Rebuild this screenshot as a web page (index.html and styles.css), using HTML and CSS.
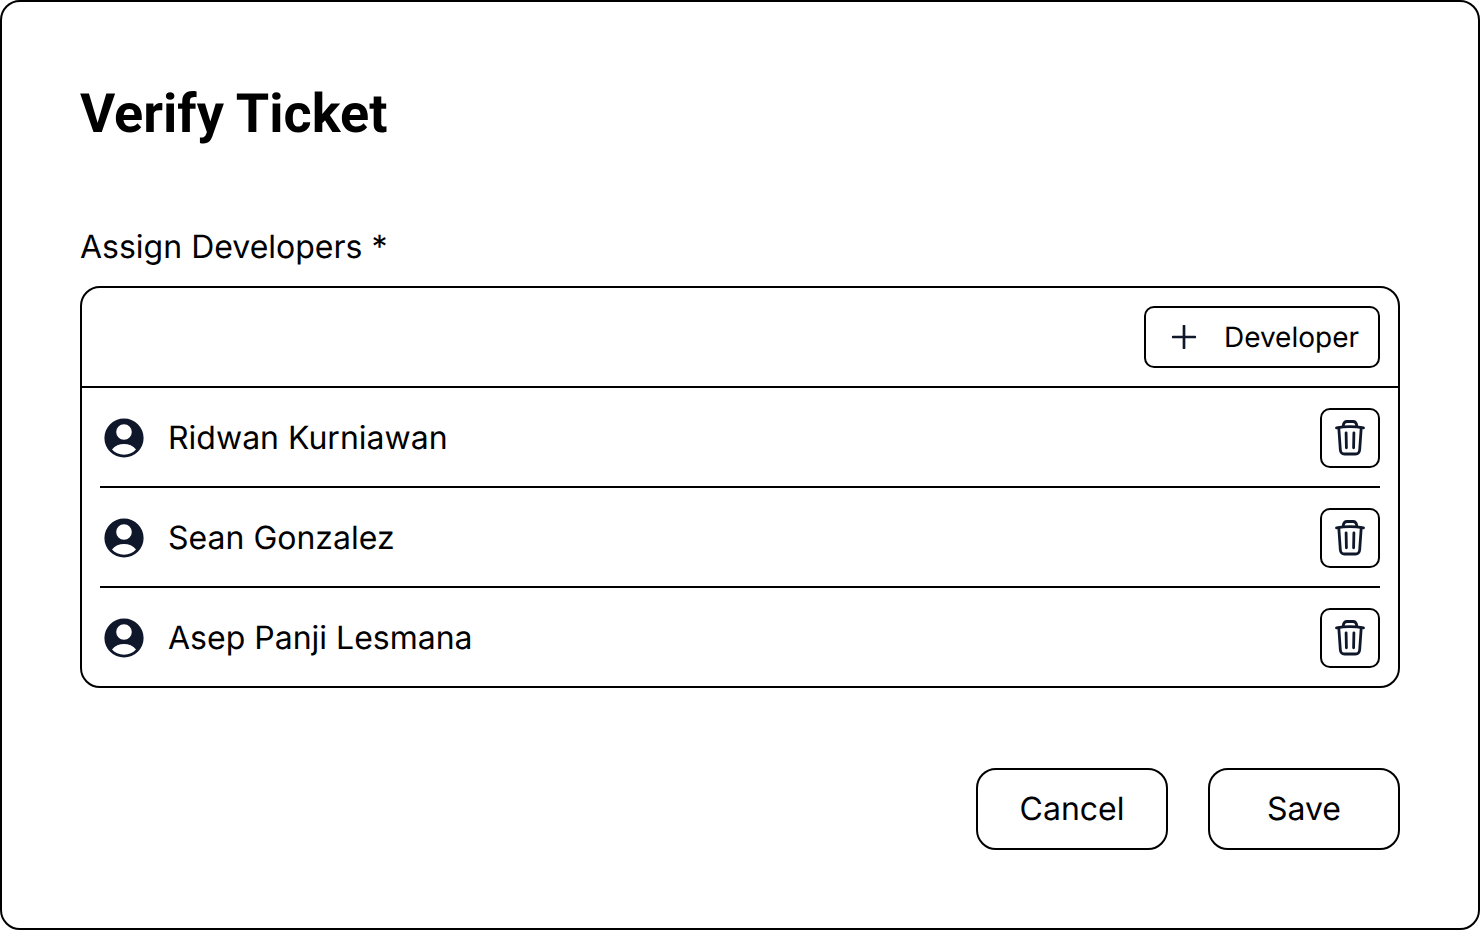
FILE: index.html
```html
<!DOCTYPE html>
<html lang="en">
<head>
<meta charset="utf-8">
<meta name="viewport" content="width=device-width, initial-scale=1">
<title>Verify Ticket</title>
<link rel="stylesheet" href="styles.css">
</head>
<body>
<svg class="sprite" aria-hidden="true">
  <symbol id="user" viewBox="0 0 48 48">
    <path fill="currentColor" fill-rule="evenodd" d="M24 4.400a19.600 19.600 0 1 0 0 39.200a19.600 19.600 0 0 0 0-39.200ZM24 10.200a7.800 7.800 0 1 1 0 15.600a7.800 7.800 0 0 1 0-15.600ZM12 35.600C15 31.800 19.200 30 24 30s9 1.800 12 5.600C33 38.800 29 40.800 24 40.800s-9-2-12-5.200Z"/>
  </symbol>
  <symbol id="trash" viewBox="0 0 48 48">
    <g fill="none" stroke="currentColor" stroke-width="2.800" stroke-linecap="round" stroke-linejoin="round">
      <path d="M10.500 13.800Q24 11.600 37.500 13.800"/>
      <path d="M17.200 12C17.500 9 18.400 7.500 21 7.500h6c2.600 0 3.500 1.500 3.800 4.500"/>
      <path d="M12.800 14l1.500 21.500c.200 3 1.200 4.500 4.200 4.500h11c3 0 4-1.500 4.200-4.500L35.200 14"/>
      <path d="M20.100 18.800l.3 15M27.900 18.800l-.3 15"/>
    </g>
  </symbol>
</svg>
<main class="dialog">
  <h1 class="title">Verify Ticket</h1>
  <form class="form">
    <h2 class="label" id="developers-label">Assign Developers *</h2>
    <section class="panel" aria-labelledby="developers-label">
      <div class="toolbar">
        <button class="add" type="button">
          <svg class="plus" viewBox="0 0 24 24" aria-hidden="true"><path d="M12 1v22M1 12h22" fill="none" stroke="currentColor" stroke-width="2.700" stroke-linecap="round"/></svg>
          <span>Developer</span>
        </button>
      </div>
      <ul class="list">
        <li class="row">
          <svg class="icon" aria-hidden="true"><use href="#user"/></svg>
          <span class="name">Ridwan Kurniawan</span>
          <button class="remove" type="button" aria-label="Remove Ridwan Kurniawan"><svg class="icon" aria-hidden="true"><use href="#trash"/></svg></button>
        </li>
        <li class="row">
          <svg class="icon" aria-hidden="true"><use href="#user"/></svg>
          <span class="name">Sean Gonzalez</span>
          <button class="remove" type="button" aria-label="Remove Sean Gonzalez"><svg class="icon" aria-hidden="true"><use href="#trash"/></svg></button>
        </li>
        <li class="row">
          <svg class="icon" aria-hidden="true"><use href="#user"/></svg>
          <span class="name">Asep Panji Lesmana</span>
          <button class="remove" type="button" aria-label="Remove Asep Panji Lesmana"><svg class="icon" aria-hidden="true"><use href="#trash"/></svg></button>
        </li>
      </ul>
    </section>
    <div class="actions">
      <button class="action" type="button">Cancel</button>
      <button class="action" type="submit">Save</button>
    </div>
  </form>
</main>
</body>
</html>
```
FILE: styles.css
```css
*, *::before, *::after { box-sizing: border-box; }

body {
  margin: 0;
  background: #fff;
  color: #000;
  font: 400 32px/40px Inter, "Liberation Sans", sans-serif;
  text-rendering: geometricPrecision;
}

button {
  border: 2px solid #000;
  background: #fff;
  color: inherit;
  font: inherit;
  text-rendering: inherit;
  cursor: pointer;
}

.sprite { position: absolute; width: 0; height: 0; }

.dialog {
  min-height: 100vh;
  padding: 78px;
  border: 2px solid #000;
  border-radius: 20px;
  background: #fff;
}

.title {
  margin: 0 0 78px;
  font: 700 54px/70px Roboto, "Liberation Sans", sans-serif;
}

.label {
  margin: 0 0 20px;
  font-size: 32px;
  font-weight: inherit;
  line-height: 38px;
}

.panel {
  border: 2px solid #000;
  border-radius: 20px;
}

.toolbar {
  display: flex;
  justify-content: flex-end;
  padding: 18px;
  border-bottom: 2px solid #000;
}

.add {
  display: flex;
  align-items: center;
  gap: 28px;
  padding: 10px 19px 10px 26px;
  border-radius: 10px;
  font-size: 28px;
  line-height: 38px;
}

.plus {
  width: 24px;
  height: 24px;
  color: #0f172a;
}

.list {
  margin: 0;
  padding: 0 18px;
  list-style: none;
}

.row {
  display: flex;
  align-items: center;
  gap: 20px;
  padding: 20px 0 18px;
}

.row + .row { border-top: 2px solid #000; }

.icon {
  flex: none;
  display: block;
  width: 48px;
  height: 48px;
  color: #0f172a;
}

.name { flex: 1; }

.remove {
  display: grid;
  place-items: center;
  width: 60px;
  height: 60px;
  padding: 0;
  border-radius: 10px;
}

.actions {
  display: flex;
  justify-content: flex-end;
  gap: 40px;
  margin-top: 80px;
}

.action {
  min-width: 192px;
  padding: 19px 20px;
  border-radius: 20px;
}
```
